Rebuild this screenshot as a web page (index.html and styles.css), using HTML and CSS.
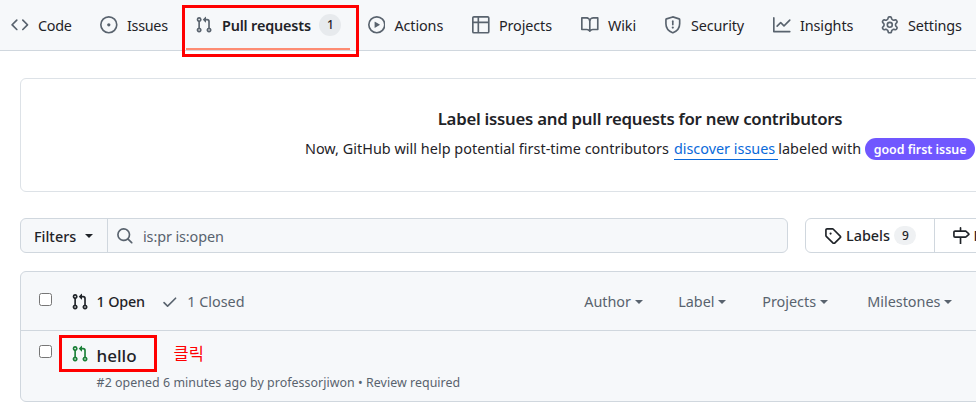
FILE: index.html
```html
<!DOCTYPE html>
<html lang="en">
<head>
<meta charset="utf-8">
<title>Pull requests</title>
<link rel="stylesheet" href="styles.css">
</head>
<body>
<svg class="sprite" aria-hidden="true">
  <symbol id="pr" viewBox="0 0 16 16"><path d="M1.5 3.25a2.25 2.25 0 1 1 3 2.122v5.256a2.251 2.251 0 1 1-1.5 0V5.372A2.25 2.25 0 0 1 1.5 3.25Zm5.677-.177L9.573.677A.25.25 0 0 1 10 .854V2.5h1A2.5 2.5 0 0 1 13.5 5v5.628a2.251 2.251 0 1 1-1.5 0V5a1 1 0 0 0-1-1h-1v1.646a.25.25 0 0 1-.427.177L7.177 3.427a.25.25 0 0 1 0-.354ZM3.75 2.5a.75.75 0 1 0 0 1.5.75.75 0 0 0 0-1.5Zm0 9.5a.75.75 0 1 0 0 1.5.75.75 0 0 0 0-1.5Zm8.25.75a.75.75 0 1 0 1.5 0 .75.75 0 0 0-1.5 0Z"/></symbol>
</svg>
<nav class="tabs">
  <a class="tab code"><svg class="icon" viewBox="0 0 16 16"><path d="m11.28 3.22 4.25 4.25a.75.75 0 0 1 0 1.06l-4.25 4.25a.749.749 0 0 1-1.275-.326.749.749 0 0 1 .215-.734L13.94 8l-3.72-3.72a.749.749 0 0 1 .326-1.275.749.749 0 0 1 .734.215Zm-6.56 0a.751.751 0 0 1 1.042.018.751.751 0 0 1 .018 1.042L2.06 8l3.72 3.72a.749.749 0 0 1-.326 1.275.749.749 0 0 1-.734-.215L.47 8.53a.75.75 0 0 1 0-1.06Z"/></svg><span>Code</span></a>
  <a class="tab issues"><svg class="icon" viewBox="0 0 16 16"><path d="M8 9.5a1.5 1.5 0 1 0 0-3 1.5 1.5 0 0 0 0 3Z"/><path d="M8 0a8 8 0 1 1 0 16A8 8 0 0 1 8 0ZM1.5 8a6.5 6.5 0 1 0 13 0 6.5 6.5 0 0 0-13 0Z"/></svg><span>Issues</span></a>
  <a class="tab pulls"><svg class="icon"><use href="#pr"/></svg><span>Pull requests</span><b class="counter">1</b><i class="underline"></i><i class="mark"></i></a>
  <a class="tab actions"><svg class="icon" viewBox="0 0 16 16"><path d="M8 0a8 8 0 1 1 0 16A8 8 0 0 1 8 0ZM1.5 8a6.5 6.5 0 1 0 13 0 6.5 6.5 0 0 0-13 0Zm4.879-2.773 4.264 2.559a.25.25 0 0 1 0 .428l-4.264 2.559A.25.25 0 0 1 6 10.559V5.442a.25.25 0 0 1 .379-.215Z"/></svg><span>Actions</span></a>
  <a class="tab projects"><svg class="icon" viewBox="0 0 16 16"><path d="M0 1.75C0 .784.784 0 1.75 0h12.5C15.216 0 16 .784 16 1.75v12.5A1.75 1.75 0 0 1 14.25 16H1.75A1.75 1.75 0 0 1 0 14.25ZM6.5 6.5v8h7.75a.25.25 0 0 0 .25-.25V6.5Zm8-1.5V1.75a.25.25 0 0 0-.25-.25H6.5V5Zm-13 1.5v7.75c0 .138.112.25.25.25H5v-8ZM5 5V1.5H1.75a.25.25 0 0 0-.25.25V5Z"/></svg><span>Projects</span></a>
  <a class="tab wiki"><svg class="icon" viewBox="0 0 16 16"><path d="M0 1.75A.75.75 0 0 1 .75 1h4.253c1.227 0 2.317.59 3 1.501A3.743 3.743 0 0 1 11.006 1h4.245a.75.75 0 0 1 .75.75v10.5a.75.75 0 0 1-.75.75h-4.507a2.25 2.25 0 0 0-1.591.659l-.622.621a.75.75 0 0 1-1.06 0l-.622-.621A2.25 2.25 0 0 0 5.258 13H.75a.75.75 0 0 1-.75-.75Zm7.251 10.324.004-5.073-.002-2.253A2.25 2.25 0 0 0 5.003 2.5H1.5v9h3.757a3.75 3.75 0 0 1 1.994.574ZM8.755 4.75l-.004 7.322a3.752 3.752 0 0 1 1.992-.572H14.5v-9h-3.495a2.25 2.25 0 0 0-2.25 2.25Z"/></svg><span>Wiki</span></a>
  <a class="tab security"><svg class="icon" viewBox="0 0 16 16"><path class="line" d="M7.9.85 2.3 2.6a.8.8 0 0 0-.55.75V7c0 3.7 2.1 6.6 6.1 8.2h.3C12.15 13.6 14.25 10.7 14.25 7V3.35a.8.8 0 0 0-.55-.75L8.1.85Z"/><path class="line" d="M8 4.7v3.3" stroke-linecap="round"/><circle cx="8" cy="10.5" r="1"/></svg><span>Security</span></a>
  <a class="tab insights"><svg class="icon" viewBox="0 0 16 16"><path d="M1.5 1.75V13.5h13.75a.75.75 0 0 1 0 1.5H.75a.75.75 0 0 1-.75-.75V1.75a.75.75 0 0 1 1.5 0Zm14.28 2.53-5.25 5.25a.75.75 0 0 1-1.06 0L7 7.06 4.28 9.78a.751.751 0 0 1-1.042-.018.751.751 0 0 1-.018-1.042l3.25-3.25a.75.75 0 0 1 1.06 0L10 7.94l4.72-4.72a.751.751 0 0 1 1.042.018.751.751 0 0 1 .018 1.042Z"/></svg><span>Insights</span></a>
  <a class="tab settings"><svg class="icon" viewBox="0 0 16 16"><path d="M8 0a8.2 8.2 0 0 1 .701.031C9.444.095 9.99.645 10.16 1.29l.288 1.107c.018.066.079.158.212.224.231.114.454.243.668.386.123.082.233.09.299.071l1.103-.303c.644-.176 1.392.021 1.82.63.27.385.506.792.704 1.218.315.675.111 1.422-.364 1.891l-.814.806c-.049.048-.098.147-.088.294.016.257.016.515 0 .772-.01.147.038.246.088.294l.814.806c.475.469.679 1.216.364 1.891a7.977 7.977 0 0 1-.704 1.217c-.428.61-1.176.807-1.82.63l-1.102-.302c-.067-.019-.177-.011-.3.071a5.909 5.909 0 0 1-.668.386c-.133.066-.194.158-.211.224l-.29 1.106c-.168.646-.715 1.196-1.458 1.26a8.006 8.006 0 0 1-1.402 0c-.743-.064-1.289-.614-1.458-1.26l-.289-1.106c-.018-.066-.079-.158-.212-.224a5.738 5.738 0 0 1-.668-.386c-.123-.082-.233-.09-.299-.071l-1.103.303c-.644.176-1.392-.021-1.82-.63a8.12 8.12 0 0 1-.704-1.218c-.315-.675-.111-1.422.363-1.891l.815-.806c.05-.048.098-.147.088-.294a6.214 6.214 0 0 1 0-.772c.01-.147-.038-.246-.088-.294l-.815-.806C.635 6.045.431 5.298.746 4.623a7.92 7.92 0 0 1 .704-1.217c.428-.61 1.176-.807 1.82-.63l1.102.302c.067.019.177.011.3-.071.214-.143.437-.272.668-.386.133-.066.194-.158.211-.224l.29-1.106C6.009.645 6.556.095 7.299.03 7.53.01 7.764 0 8 0Zm-.571 1.525c-.036.003-.108.036-.137.146l-.289 1.105c-.147.561-.549.967-.998 1.189-.173.086-.34.183-.5.29-.417.278-.97.423-1.529.27l-1.103-.303c-.109-.03-.175.016-.195.045-.22.312-.412.644-.573.99-.014.031-.021.11.059.19l.815.806c.411.406.562.957.53 1.456a4.709 4.709 0 0 0 0 .582c.032.499-.119 1.05-.53 1.456l-.815.806c-.081.08-.073.159-.059.19.162.346.353.677.573.989.02.03.085.076.195.046l1.102-.303c.56-.153 1.113-.008 1.53.27.161.107.328.204.501.29.447.222.85.629.997 1.189l.289 1.105c.029.109.101.143.137.146a6.6 6.6 0 0 0 1.142 0c.036-.003.108-.036.137-.146l.289-1.105c.147-.561.549-.967.998-1.189.173-.086.34-.183.5-.29.417-.278.97-.423 1.529-.27l1.103.303c.109.029.175-.016.195-.045.22-.313.411-.644.573-.99.014-.031.021-.11-.059-.19l-.815-.806c-.411-.406-.562-.957-.53-1.456a4.709 4.709 0 0 0 0-.582c-.032-.499.119-1.05.53-1.456l.815-.806c.081-.08.073-.159.059-.19a6.464 6.464 0 0 0-.573-.989c-.02-.03-.085-.076-.195-.046l-1.102.303c-.56.153-1.113.008-1.53-.27a4.44 4.44 0 0 0-.501-.29c-.447-.222-.85-.629-.997-1.189l-.289-1.105c-.029-.11-.101-.143-.137-.146a6.6 6.6 0 0 0-1.142 0ZM11 8a3 3 0 1 1-6 0 3 3 0 0 1 6 0ZM9.5 8a1.5 1.5 0 1 0-3.001.001A1.5 1.5 0 0 0 9.5 8Z"/></svg><span>Settings</span></a>
</nav>
<main class="page">
  <section class="banner">
    <h2>Label issues and pull requests for new contributors</h2>
    <p><span class="intro">Now, GitHub will help potential first-time contributors</span><a class="discover">discover issues</a><span class="labeled">labeled with</span><span class="pill">good first issue</span></p>
  </section>
  <section class="toolbar">
    <div class="search">
      <button class="filters"><span>Filters</span><i class="caret"></i></button>
      <div class="query"><svg class="icon" viewBox="0 0 16 16"><path d="M10.68 11.74a6 6 0 0 1-7.922-8.982 6 6 0 0 1 8.982 7.922l3.04 3.04a.749.749 0 0 1-.326 1.275.749.749 0 0 1-.734-.215ZM11.5 7a4.499 4.499 0 1 0-8.997 0A4.499 4.499 0 0 0 11.5 7Z"/></svg><span>is:pr is:open</span></div>
    </div>
    <div class="subnav">
      <a class="labels"><svg class="icon" viewBox="0 0 16 16"><path d="M1 7.775V2.75C1 1.784 1.784 1 2.75 1h5.025c.464 0 .91.184 1.238.513l6.25 6.25a1.75 1.75 0 0 1 0 2.474l-5.026 5.026a1.75 1.75 0 0 1-2.474 0l-6.25-6.25A1.752 1.752 0 0 1 1 7.775Zm1.5 0c0 .066.026.13.073.177l6.25 6.25a.25.25 0 0 0 .354 0l5.025-5.025a.25.25 0 0 0 0-.354l-6.25-6.25a.25.25 0 0 0-.177-.073H2.75a.25.25 0 0 0-.25.25ZM6 5a1 1 0 1 1 0 2 1 1 0 0 1 0-2Z"/></svg><span>Labels</span><b class="counter">9</b></a>
      <a class="milestones"><svg class="icon" viewBox="0 0 16 16"><path d="M7.75 0a.75.75 0 0 1 .75.75V3h3.634c.414 0 .814.147 1.13.414l2.07 1.75a1.75 1.75 0 0 1 0 2.672l-2.07 1.75a1.75 1.75 0 0 1-1.13.414H8.5v5.25a.75.75 0 0 1-1.5 0V10H2.75A1.75 1.75 0 0 1 1 8.25v-3.5C1 3.784 1.784 3 2.75 3H7V.75A.75.75 0 0 1 7.75 0Zm4.384 8.5a.25.25 0 0 0 .161-.06l2.07-1.75a.248.248 0 0 0 0-.38l-2.07-1.75a.25.25 0 0 0-.161-.06H2.75a.25.25 0 0 0-.25.25v3.5c0 .138.112.25.25.25h9.384Z"/></svg><span>Milestones</span></a>
    </div>
  </section>
  <section class="list">
    <header class="head">
      <i class="check"></i>
      <svg class="icon"><use href="#pr"/></svg>
      <span class="open">1 Open</span>
      <svg class="icon tick" viewBox="0 0 16 16"><path d="M13.78 4.22a.75.75 0 0 1 0 1.06l-7.25 7.25a.75.75 0 0 1-1.06 0L2.22 9.28a.751.751 0 0 1 .018-1.042.751.751 0 0 1 1.042-.018L6 10.94l6.72-6.72a.75.75 0 0 1 1.06 0Z"/></svg>
      <span class="closed">1 Closed</span>
      <div class="sorts">
        <span class="sort author"><span>Author</span><i class="caret"></i></span>
        <span class="sort label"><span>Label</span><i class="caret"></i></span>
        <span class="sort project"><span>Projects</span><i class="caret"></i></span>
        <span class="sort milestone"><span>Milestones</span><i class="caret"></i></span>
      </div>
    </header>
    <article class="row">
      <i class="check"></i>
      <svg class="icon green"><use href="#pr"/></svg>
      <div class="info">
        <div class="line1"><a class="title">hello</a><span class="note" lang="ko">클릭</span></div>
        <div class="meta">#2 opened 6 minutes ago by professorjiwon • Review required</div>
      </div>
      <i class="mark"></i>
    </article>
  </section>
</main>
</body>
</html>
```
FILE: styles.css
```css
* { box-sizing: border-box; }
body {
  margin: 0;
  height: 412px;
  overflow: hidden;
  background: #fff;
  color: #1f2328;
  font: 14.4px/20px "Noto Sans", "Open Sans", sans-serif;
  white-space: nowrap;
}
.sprite { display: none; }
.icon { width: 17.6px; height: 17.6px; flex: none; fill: currentColor; }
.line { fill: none; stroke: currentColor; stroke-width: 1.5; }

.tabs {
  display: flex;
  height: 51px;
  padding-left: 11px;
  background: #f6f8fa;
  border-bottom: 1px solid #d0d7de;
}
.tab {
  display: flex;
  flex: none;
  align-items: center;
  gap: 9.4px;
  height: 50px;
  position: relative;
  letter-spacing: -0.12px;
}
.tab .icon { color: #59636e; }
.tab > span { padding-top: 1px; }
.code { width: 89px; }
.issues { width: 95px; }
.pulls { width: 172.5px; font-weight: 600; }
.actions { width: 104.5px; }
.projects { width: 109px; }
.wiki { width: 83px; }
.security { width: 109px; }
.insights { width: 108px; }
.pulls > span { width: 88px; letter-spacing: -0.16px; }
.code > span, .issues > span { letter-spacing: -0.3px; }
.counter {
  display: flex;
  align-items: center;
  justify-content: center;
  width: 22px;
  height: 22px;
  border-radius: 11px;
  background: #e7eaed;
  font-size: 12px;
  font-weight: 500;
  letter-spacing: 0;
}
.underline {
  position: absolute;
  left: -9px;
  bottom: 0;
  width: 164px;
  height: 2px;
  background: #fd8c73;
}
.mark { position: absolute; border: 3px solid #f00; }
.pulls .mark { left: -13px; top: 5px; width: 177px; height: 52px; }

.page { width: 1280px; padding: 27px 20px 0; }
.banner {
  height: 114px;
  padding-top: 28px;
  border: 1px solid #dde2e7;
  border-radius: 6px;
  text-align: center;
}
.banner h2 { margin: 0; font-size: 16.8px; line-height: 24px; font-weight: 600; letter-spacing: -0.26px; }
.banner p { display: flex; justify-content: center; align-items: center; margin: 7px 0 0; height: 22px; }
.intro { letter-spacing: 0.03px; }
.discover { margin-left: 5px; padding-right: 3px; color: #0969da; border-bottom: 1px solid #0969da; line-height: 20px; }
.labeled { letter-spacing: 0.05px; }
.pill {
  margin-left: 4px;
  width: 110px;
  height: 22px;
  border-radius: 11px;
  background: #7057ff;
  color: #fff;
  font-size: 12.4px;
  font-weight: 600;
  line-height: 23px;
}
.intro, .labeled { padding-bottom: 1px; }

.toolbar { display: flex; gap: 17px; margin-top: 26px; }
.search { display: flex; width: 768px; height: 35px; border: 1px solid #d0d7de; border-radius: 6px; background: #f6f8fa; }
.filters {
  display: flex;
  align-items: center;
  gap: 9px;
  width: 87px;
  padding: 0 0 0 13px;
  border: 0;
  border-right: 1px solid #d0d7de;
  background: none;
  color: #1f2328;
  font: inherit;
  font-weight: 500;
}
.filters span, .query span { padding-top: 2px; }
.caret { border: 4px solid transparent; border-top-color: currentColor; border-bottom: 0; }
.query { display: flex; align-items: center; gap: 9.4px; padding-left: 8px; color: #59636e; letter-spacing: -0.1px; }
.subnav { display: flex; width: 300px; height: 35px; border: 1px solid #d0d7de; border-radius: 6px; font-weight: 500; }
.labels { display: flex; align-items: center; width: 129px; padding-left: 18px; gap: 4.4px; border-right: 1px solid #d0d7de; }
.subnav .counter { background: #eff1f3; height: 19px; }
.milestones { display: flex; align-items: center; gap: 4px; padding-left: 17px; }

.list { margin-top: 18px; height: 131px; border: 1px solid #d0d7de; border-radius: 6px; background: #f6f8fa; }
.head { display: flex; align-items: center; height: 59px; padding-left: 18px; border-bottom: 1px solid #d0d7de; color: #59636e; }
.head > *:not(.check) { margin-top: 2px; }
.check { width: 13px; height: 13px; flex: none; border: 1px solid #767676; border-radius: 2.5px; background: #fff; }
.head .check { margin: 0 19px 3px 0; }
.head .icon { color: #1f2328; }
.head .icon.tick { color: #59636e; margin-right: 9px; }
.open { width: 64px; margin-left: 8px; color: #1f2328; font-weight: 500; letter-spacing: -0.2px; }
.closed { width: 397px; }
.sorts { display: flex; }
.sort { display: flex; align-items: center; gap: 4px; }
.author { width: 94px; }
.label { width: 84px; }
.project { width: 105px; }
.row { display: flex; position: relative; height: 70px; padding-left: 18px; }
.row .check { margin: 14px 19px 0 0; }
.green { margin-top: 14px; color: #1a7f37; }
.info { margin-left: 8px; }
.line1 { display: flex; height: 24px; margin-top: 12px; }
.title { width: 77px; font-size: 17px; line-height: 25px; font-weight: 500; }
.note { color: #f00; font: 400 16.5px/20px "Noto Sans CJK KR", sans-serif; }
.meta { margin-top: 6px; color: #59636e; font-size: 12.4px; line-height: 20px; letter-spacing: 0.05px; }
.row .mark { left: 38px; top: 4px; width: 98px; height: 37px; }
```
